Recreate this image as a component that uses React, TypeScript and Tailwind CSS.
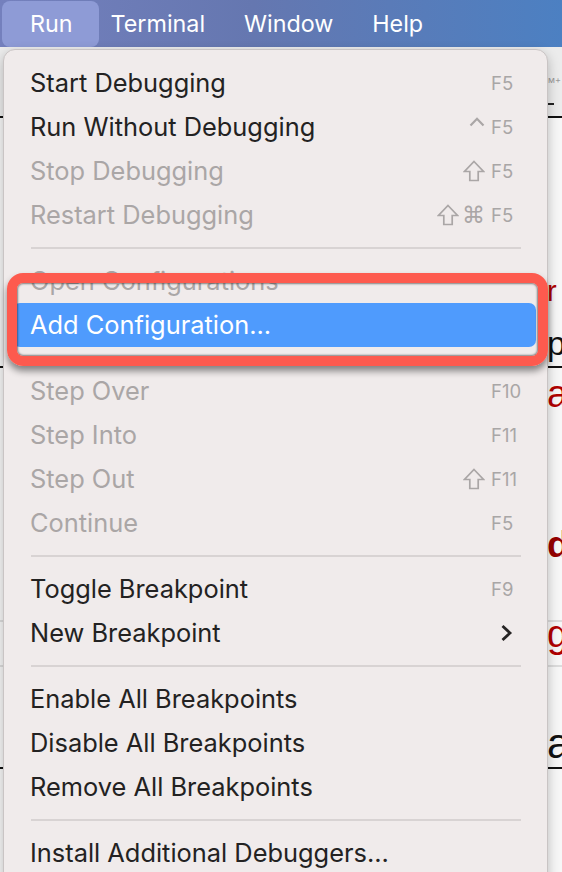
import React from "react";

type Row =
  | "sep"
  | {
      t: string;
      d?: boolean;
      mods?: ("ctrl" | "shift" | "cmd")[];
      k?: string;
      hl?: boolean;
      sub?: boolean;
    };

const rows: Row[] = [
  { t: "Start Debugging", k: "F5" },
  { t: "Run Without Debugging", mods: ["ctrl"], k: "F5" },
  { t: "Stop Debugging", d: true, mods: ["shift"], k: "F5" },
  { t: "Restart Debugging", d: true, mods: ["shift", "cmd"], k: "F5" },
  "sep",
  { t: "Open Configurations", d: true },
  { t: "Add Configuration...", hl: true },
  "sep",
  { t: "Step Over", d: true, k: "F10" },
  { t: "Step Into", d: true, k: "F11" },
  { t: "Step Out", d: true, mods: ["shift"], k: "F11" },
  { t: "Continue", d: true, k: "F5" },
  "sep",
  { t: "Toggle Breakpoint", k: "F9" },
  { t: "New Breakpoint", sub: true },
  "sep",
  { t: "Enable All Breakpoints" },
  { t: "Disable All Breakpoints" },
  { t: "Remove All Breakpoints" },
  "sep",
  { t: "Install Additional Debuggers..." },
];

function Shift() {
  return (
    <svg width="22" height="22" viewBox="0 0 22 22" fill="none">
      <path
        d="M11 1.5 L20.5 11.5 L15.2 11.5 L15.2 20.5 L6.8 20.5 L6.8 11.5 L1.5 11.5 Z"
        stroke="#aaa6a6"
        strokeWidth="1.7"
        strokeLinejoin="miter"
      />
    </svg>
  );
}

function Ctrl() {
  return (
    <svg width="16" height="10" viewBox="0 0 16 10" fill="none" className="mb-[10px]">
      <path d="M1.5 8.5 L8 1.8 L14.5 8.5" stroke="#aaa6a6" strokeWidth="2.2" />
    </svg>
  );
}

function Chevron() {
  return (
    <svg width="13" height="18" viewBox="0 0 13 18" fill="none">
      <path d="M2.5 2 L10 9 L2.5 16" stroke="#262424" strokeWidth="2.8" strokeLinejoin="miter" />
    </svg>
  );
}

function MenuRow({ r }: { r: Exclude<Row, "sep"> }) {
  const color = r.hl ? "text-white" : r.d ? "text-[#aaa6a6]" : "text-[#232222]";
  return (
    <div className="relative h-[44px] flex items-center pl-[26px] pr-[26px]">
      {r.hl && (
        <div className="absolute left-[9px] right-[11px] top-0 bottom-0 rounded-[7px] bg-[#4f9bfd]" />
      )}
      <span className={`relative text-[25.4px] leading-none ${color}`}>{r.t}</span>
      <div className="flex-1" />
      {r.mods && (
        <div className="flex items-center gap-[3px] mr-[6px]">
          {r.mods.map((m, i) =>
            m === "shift" ? (
              <Shift key={i} />
            ) : m === "ctrl" ? (
              <Ctrl key={i} />
            ) : (
              <span
                key={i}
                className="text-[23px] leading-none text-[#aaa6a6] font-['DejaVu_Sans',sans-serif]"
              >
                ⌘
              </span>
            )
          )}
        </div>
      )}
      {(r.k || r.sub) && (
        <div className="w-[30px] flex items-center">
          {r.k && <span className="text-[18.5px] leading-none text-[#a9a6a6]">{r.k}</span>}
          {r.sub && (
            <div className="ml-[9px]">
              <Chevron />
            </div>
          )}
        </div>
      )}
    </div>
  );
}

function Separator() {
  return (
    <div className="h-[22px] flex items-center pl-[27px] pr-[26px]">
      <div className="h-[2px] w-full bg-[#d8d3d3]" />
    </div>
  );
}

const strip = "pl-[547px] font-['Liberation_Sans',sans-serif] whitespace-nowrap overflow-hidden";

function BackgroundStrip() {
  return (
    <div className="flex flex-col">
      <div className="h-[56px] bg-[#ececec] pl-[548px] pt-[18px]">
        <span className="text-[9px] text-[#9a9a9a] leading-none">м+</span>
      </div>
      <div className="h-[2px] bg-[#ececec] pl-[548px]">
        <div className="h-[2px] w-[6px] bg-[#222]" />
      </div>
      <div className="h-[11px] bg-[#ececec]" />
      <div className="h-[2px] bg-[#111]" />
      <div className="h-[163px]" />
      <div className={`h-[34px] text-[29px] leading-[21px] text-[#b10000] ${strip}`}>r</div>
      <div className={`h-[51px] text-[34px] leading-[57px] text-[#111] ${strip}`}>p</div>
      <div className="h-[2px] bg-[#111]" />
      <div className={`h-[40px] text-[38px] leading-[52px] text-[#b10000] ${strip}`}>a</div>
      <div className="h-[112px]" />
      <div className={`h-[45px] text-[37px] font-bold leading-[50px] text-[#960000] ${strip}`}>d</div>
      <div className="h-[55px]" />
      <div className="h-[2px] bg-[#dcdcdc]" />
      <div className={`h-[43px] text-[38px] leading-[25px] text-[#b10000] ${strip}`}>g</div>
      <div className="h-[2px] bg-[#dcdcdc]" />
      <div className="h-[53px]" />
      <div className={`h-[45px] text-[42px] leading-[47px] text-[#111] ${strip}`}>a</div>
      <div className="h-[2px]" />
      <div className="h-[2px] bg-[#111]" />
    </div>
  );
}

export default function App() {
  return (
    <div className="relative w-[562px] h-[872px] overflow-hidden bg-[#f7f7f7] font-['Inter','Noto_Sans',sans-serif]">
      {/* top menu bar */}
      <div className="h-[47px] flex items-center bg-[linear-gradient(90deg,#7480bd_0%,#6577b0_45%,#4c80c2_100%)]">
        <div className="ml-[2px] h-[46px] pl-[28px] pr-[26px] flex items-center rounded-[8px] bg-[#8e9bd6]">
          <span className="text-[23.3px] text-white leading-none">Run</span>
        </div>
        <div className="ml-[12px] flex items-center gap-[39px]">
          <span className="text-[23.3px] text-white leading-none">Terminal</span>
          <span className="text-[23.3px] text-white leading-none">Window</span>
          <span className="text-[23.3px] text-white leading-none">Help</span>
        </div>
      </div>

      <BackgroundStrip />

      {/* dropdown menu */}
      <div className="absolute left-[3px] top-[49px] w-[545px] h-[900px] rounded-[12px] bg-[#f0ebeb] border border-[#c9c4c4] shadow-[0_4px_12px_rgba(0,0,0,0.25)] pt-[11px]">
        {rows.map((r, i) => (r === "sep" ? <Separator key={i} /> : <MenuRow key={i} r={r} />))}
      </div>

      {/* red callout */}
      <div className="absolute left-[7px] top-[273px] w-[541px] h-[93px] rounded-[16px] border-[10px] border-[#fd5a4e] shadow-[0_5px_7px_rgba(0,0,0,0.45),inset_0_0_2px_1px_rgba(40,40,40,0.55)]" />
    </div>
  );
}
